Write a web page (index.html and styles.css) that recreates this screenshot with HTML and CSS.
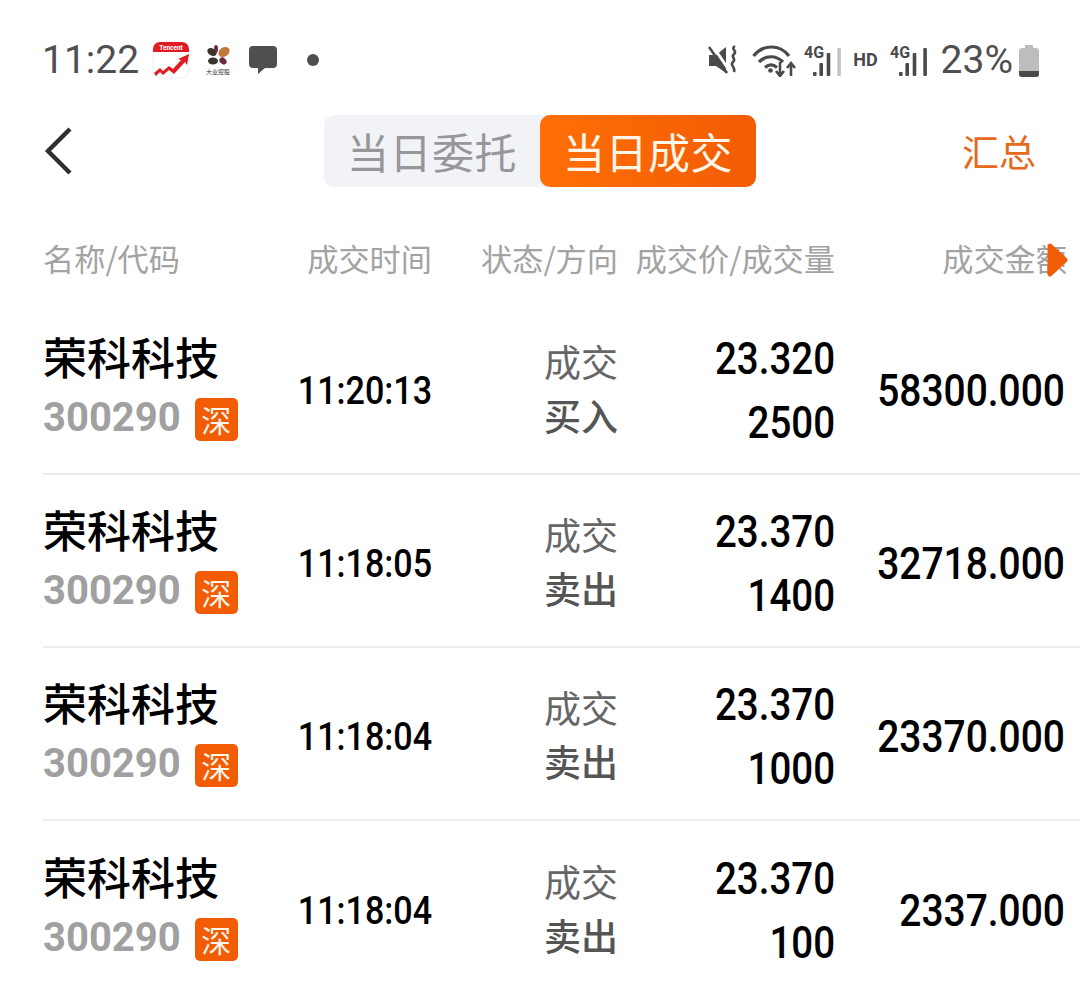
FILE: index.html
```html
<!DOCTYPE html>
<html lang="zh-CN">
<head>
<meta charset="utf-8">
<title>当日成交</title>
<link rel="stylesheet" href="styles.css">
</head>
<body>
<div class="page">
  <div class="status">
    <div class="status-left">
      <span class="clock">11:22</span>
      <svg class="ic-tencent" width="38" height="38" viewBox="0 0 38 38">
        <rect x="1" y="1" width="36" height="36" rx="7" fill="#fff" stroke="#eee"/>
        <path d="M1 11V8a7 7 0 0 1 7-7h22a7 7 0 0 1 7 7v3z" fill="#e11b22"/>
        <text x="19" y="8.5" class="tiny">Tencent</text>
        <path d="M2 32l6-5 3 3 6-5 4 3 8-9-3-1 11-5-2 11-2-3-11 12-5-4-6 5-3-3-4 4z" fill="#e11b22"/>
      </svg>
      <svg class="ic-flower" width="28" height="32" viewBox="0 0 28 32">
        <ellipse cx="8" cy="8" rx="5" ry="3.5" fill="#3b3330" transform="rotate(30 8 8)"/>
        <ellipse cx="12" cy="5" rx="2" ry="4" fill="#6b2d3a"/>
        <ellipse cx="20" cy="8" rx="6" ry="4.5" fill="#c1763a" transform="rotate(-35 20 8)"/>
        <ellipse cx="9" cy="17" rx="5" ry="3.5" fill="#3b3330"/>
        <ellipse cx="19" cy="17" rx="4" ry="3" fill="#6b2d3a" transform="rotate(40 19 17)"/>
        <text x="14" y="30" class="micro">大业控股</text>
      </svg>
      <svg class="ic-chat" width="30" height="30" viewBox="0 0 30 30">
        <path d="M5 1h20a4 4 0 0 1 4 4v14a4 4 0 0 1-4 4H17l-7 6v-6H5a4 4 0 0 1-4-4V5a4 4 0 0 1 4-4z" fill="#4f4f4f"/>
      </svg>
      <span class="dot"></span>
    </div>
    <div class="status-right">
      <svg class="ic-mute" width="32" height="32" viewBox="0 0 32 32">
        <path d="M1 11h7l10-8v26l-10-7H1z" fill="#4a4a4a"/>
        <path d="M4 1l17 25" stroke="#fff" stroke-width="3"/>
        <path d="M1 3l18 26" stroke="#4a4a4a" stroke-width="2.6"/>
        <path d="M27 2c-5 3 3 5-1 8s3 5-1 8 3 5 1 10" fill="none" stroke="#4a4a4a" stroke-width="2.6"/>
      </svg>
      <svg class="ic-wifi" width="46" height="34" viewBox="0 0 46 34">
        <path d="M1.5 13C11 1 28 1 37 13M7 19C14 12 24 12 31 19M13 24.5C17 21 21 21 25 24.5" fill="none" stroke="#4a4a4a" stroke-width="3.2"/>
        <circle cx="18.5" cy="27.5" r="2.3" fill="#4a4a4a"/>
        <path d="M28 19v14m-4-5l4 5 4-5M39 33V20m-4 5l4-5 4 5" fill="none" stroke="#4a4a4a" stroke-width="2.6"/>
      </svg>
      <svg class="ic-signal" width="38" height="34" viewBox="0 0 38 34">
        <text x="0" y="15" class="sig">4G</text>
        <rect x="9" y="29" width="3.6" height="4" rx="1" fill="#4a4a4a"/>
        <rect x="15.4" y="20" width="3.6" height="13" rx="1" fill="#4a4a4a"/>
        <rect x="22.7" y="10" width="3.6" height="23" rx="1" fill="#4a4a4a"/>
        <rect x="33.3" y="5" width="3.6" height="28" rx="1" fill="#c4c4c4"/>
      </svg>
      <span class="hd">HD</span>
      <svg class="ic-signal" width="38" height="34" viewBox="0 0 38 34">
        <text x="0" y="15" class="sig">4G</text>
        <rect x="9" y="29" width="3.6" height="4" rx="1" fill="#4a4a4a"/>
        <rect x="15.4" y="20" width="3.6" height="13" rx="1" fill="#4a4a4a"/>
        <rect x="22.7" y="10" width="3.6" height="23" rx="1" fill="#4a4a4a"/>
        <rect x="33.3" y="5" width="3.6" height="28" rx="1" fill="#4a4a4a"/>
      </svg>
      <span class="pct">23%</span>
      <svg class="ic-batt" width="20" height="32" viewBox="0 0 20 32">
        <path d="M6 0h8v3h3a3 3 0 0 1 3 3v23a3 3 0 0 1-3 3H3a3 3 0 0 1-3-3V6a3 3 0 0 1 3-3h3z" fill="#bdbdbd"/>
        <path d="M0 26h20v3a3 3 0 0 1-3 3H3a3 3 0 0 1-3-3z" fill="#4a4a4a"/>
      </svg>
    </div>
  </div>

  <div class="nav">
    <svg class="back" width="30" height="50" viewBox="0 0 30 50">
      <path d="M26 3L4 25l22 22" fill="none" stroke="#2f2f2f" stroke-width="4.4"/>
    </svg>
    <div class="tabs">
      <span class="tab">当日委托</span>
      <span class="tab tab-on">当日成交</span>
    </div>
    <span class="sum">汇总</span>
  </div>

  <div class="grid head">
    <span>名称/代码</span>
    <span class="r">成交时间</span>
    <span class="r">状态/方向</span>
    <span class="r">成交价/成交量</span>
    <span class="r head-last">成交金额</span>
    <svg class="more" width="22" height="34" viewBox="0 0 22 34">
      <path d="M4 3l15 14L4 31z" fill="#f25c05" stroke="#f25c05" stroke-width="5" stroke-linejoin="round"/>
    </svg>
  </div>

  <div class="grid row">
    <div class="stock"><div class="name">荣科科技</div><div class="code-line"><span class="code">300290</span><span class="tag">深</span></div></div>
    <div class="r time">11:20:13</div>
    <div class="r state"><div>成交</div><div class="dir">买入</div></div>
    <div class="r pair"><div>23.320</div><div>2500</div></div>
    <div class="r amount">58300.000</div>
  </div>
  <div class="grid row">
    <div class="stock"><div class="name">荣科科技</div><div class="code-line"><span class="code">300290</span><span class="tag">深</span></div></div>
    <div class="r time">11:18:05</div>
    <div class="r state"><div>成交</div><div class="dir">卖出</div></div>
    <div class="r pair"><div>23.370</div><div>1400</div></div>
    <div class="r amount">32718.000</div>
  </div>
  <div class="grid row">
    <div class="stock"><div class="name">荣科科技</div><div class="code-line"><span class="code">300290</span><span class="tag">深</span></div></div>
    <div class="r time">11:18:04</div>
    <div class="r state"><div>成交</div><div class="dir">卖出</div></div>
    <div class="r pair"><div>23.370</div><div>1000</div></div>
    <div class="r amount">23370.000</div>
  </div>
  <div class="grid row">
    <div class="stock"><div class="name">荣科科技</div><div class="code-line"><span class="code">300290</span><span class="tag">深</span></div></div>
    <div class="r time">11:18:04</div>
    <div class="r state"><div>成交</div><div class="dir">卖出</div></div>
    <div class="r pair"><div>23.370</div><div>100</div></div>
    <div class="r amount">2337.000</div>
  </div>
</div>
</body>
</html>
```
FILE: styles.css
```css
* { box-sizing: border-box; }
html, body { margin: 0; padding: 0; background: #fff; }
body { font-family: Roboto, "Noto Sans CJK SC", sans-serif; color: #000; }
.page { width: 1080px; height: 985px; overflow: hidden; position: relative; }

.status { height: 115px; padding: 38px 41px 0 42px; display: flex; justify-content: space-between; align-items: flex-start; color: #4f4f4f; }
.status-left, .status-right { display: flex; align-items: center; height: 44px; }
.clock { font-size: 39px; line-height: 44px; width: 110px; }
.ic-flower { margin-left: 14px; }
.ic-chat { margin-left: 16px; }
.dot { width: 12px; height: 12px; border-radius: 50%; background: #4f4f4f; margin-left: 29px; }
.tiny { font: 700 6.5px Roboto, sans-serif; fill: #fff; text-anchor: middle; }
.micro { font: 400 6px "Noto Sans CJK SC", sans-serif; fill: #333; text-anchor: middle; }
.sig { font: 700 16px Roboto, sans-serif; fill: #4a4a4a; }
.status-right svg { display: block; }
.ic-mute { margin-right: 12px; }
.ic-wifi { margin-right: 6px; }
.ic-batt { margin-top: 1px; }
.hd { font: 700 18px/44px Roboto, sans-serif; color: #4a4a4a; margin: 0 12px 0 11px; }
.pct { font-size: 39px; line-height: 44px; margin-left: 13px; margin-right: 6px; }

.nav { height: 72px; padding: 0 44px; display: flex; align-items: center; }
.back { display: block; }
.tabs { display: flex; width: 432px; height: 72px; margin-left: 250px; margin-right: auto; background: #f2f3f7; border-radius: 10px; }
.tab { width: 216px; text-align: center; font: 400 42px/72px "Noto Sans CJK SC", sans-serif; color: #97979b; letter-spacing: 0.5px; }
.tab-on { background: linear-gradient(90deg, #ff6f05, #f25c05); color: #fff5e8; border-radius: 10px; }
.sum { font: 400 37px/72px "Noto Sans CJK SC", sans-serif; color: #e56a1c; }

.grid { display: grid; grid-template-columns: 220px 169px 186px 217px 229px; margin-left: 43px; align-items: center; }
.r { text-align: right; }
.head { height: 115px; padding-top: 27px; font: 400 31.2px/40px "Noto Sans CJK SC", sans-serif; color: #a3a3a3; position: relative; white-space: nowrap; }
.head > span { display: block; }
.head-last { margin-right: -3px; }
.more { position: absolute; left: 1003px; top: 56px; }

.row { height: 173px; border-bottom: 2px solid #ececec; }
.row:last-child { border-bottom: 0; }
.stock { padding-bottom: 2px; }
.name { font: 500 44px/58px "Noto Sans CJK SC", sans-serif; }
.code-line { display: flex; align-items: center; margin-top: 4px; }
.code { font: 700 40px/58px Roboto, sans-serif; color: #a0a0a0; }
.tag { width: 43px; height: 43px; margin: 3px 0 0 14px; border-radius: 5px; background: #f25c05; color: #fff5e8; font: 400 30px/43px "Noto Sans CJK SC", sans-serif; text-align: center; }
.time, .pair, .amount { font-weight: 500; transform-origin: right center; }
.time { font-size: 39.4px; line-height: 44px; padding-top: 6px; transform: scaleX(0.865); }
.state { font: 400 37px/54px "Noto Sans CJK SC", sans-serif; color: #666; }
.dir { font-weight: 500; color: #555; }
.pair { font-size: 45px; line-height: 64px; padding-top: 6px; transform: scaleX(0.855); }
.amount { font-size: 45px; line-height: 50px; padding-top: 6px; margin-right: -1px; transform: scaleX(0.865); }
```
